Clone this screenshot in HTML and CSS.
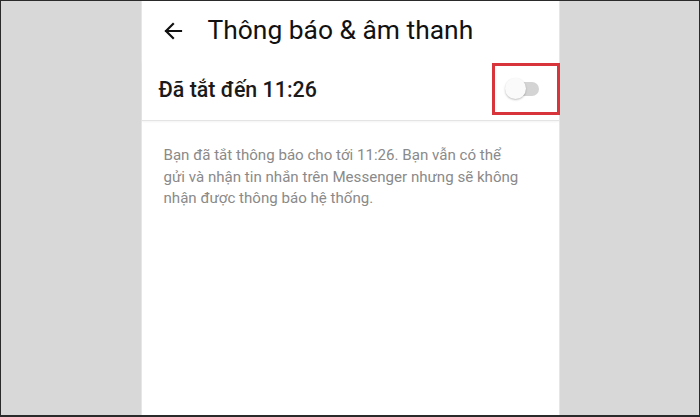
FILE: index.html
```html
<!DOCTYPE html>
<html lang="vi">
<head>
<meta charset="utf-8">
<link rel="stylesheet" href="styles.css">
</head>
<body>
<div class="frame">
  <div class="panel">
    <div class="header">
      <svg class="back" width="20" height="18" viewBox="0 0 20 18"><path d="M18 9H3M10 2L3 9l7 7" fill="none" stroke="#111" stroke-width="2.2" stroke-linecap="square"/></svg>
      <h1 class="title">Thông báo &amp; âm thanh</h1>
    </div>
    <div class="row">
      <span class="row-label">Đã tắt đến 11:26</span>
      <div class="highlight">
        <div class="toggle"><div class="thumb"></div></div>
      </div>
    </div>
    <p class="desc">Bạn đã tắt thông báo cho tới 11:26. Bạn vẫn có thể<br>gửi và nhận tin nhắn trên Messenger nhưng sẽ không<br>nhận được thông báo hệ thống.</p>
  </div>
</div>
</body>
</html>
```
FILE: styles.css
```css
html, body { margin: 0; padding: 0; }
body { font-family: Roboto, "Noto Sans", sans-serif; }
.frame {
  box-sizing: border-box;
  width: 700px;
  height: 417px;
  background: #d8d8d8;
  border: 1px solid #2a2a2a;
  border-bottom-width: 2px;
  display: flex;
  justify-content: center;
}
.panel {
  width: 417px;
  background: #fff;
  box-shadow: -1px 0 0 #e6e6e6, 1px 0 0 #e6e6e6;
}
.header {
  display: flex;
  align-items: center;
  height: 60px;
  padding-left: 21px;
}
.back { flex: none; }
.title {
  margin: 0 0 2px 25px;
  font-size: 26.4px;
  font-weight: 400;
  color: #111;
}
.row {
  display: flex;
  align-items: center;
  justify-content: space-between;
  height: 59px;
  padding-left: 17px;
  border-bottom: 1px solid #e4e4e4;
  box-shadow: 0 1px 2px rgba(0,0,0,0.05);
}
.row-label {
  font-size: 21.4px;
  font-weight: 500;
  color: #1a1a1a;
  margin-bottom: 2px;
}
.highlight {
  box-sizing: border-box;
  width: 68px;
  height: 52px;
  border: 3px solid #d8343c;
  display: flex;
  align-items: center;
  justify-content: center;
  margin-right: -1px;
  margin-bottom: 4px;
}
.toggle {
  position: relative;
  width: 26px;
  height: 14px;
  border-radius: 7px;
  background: #d4d4d4;
}
.thumb {
  position: absolute;
  left: -8px;
  top: -4px;
  width: 21px;
  height: 21px;
  border-radius: 50%;
  background: #fafafa;
  box-shadow: 0 1px 2px rgba(0,0,0,0.25);
}
.desc {
  margin: 24px 4px 0 22px;
  font-size: 15.1px;
  line-height: 21.5px;
  color: #8a8a8a;
  white-space: nowrap;
}
```
